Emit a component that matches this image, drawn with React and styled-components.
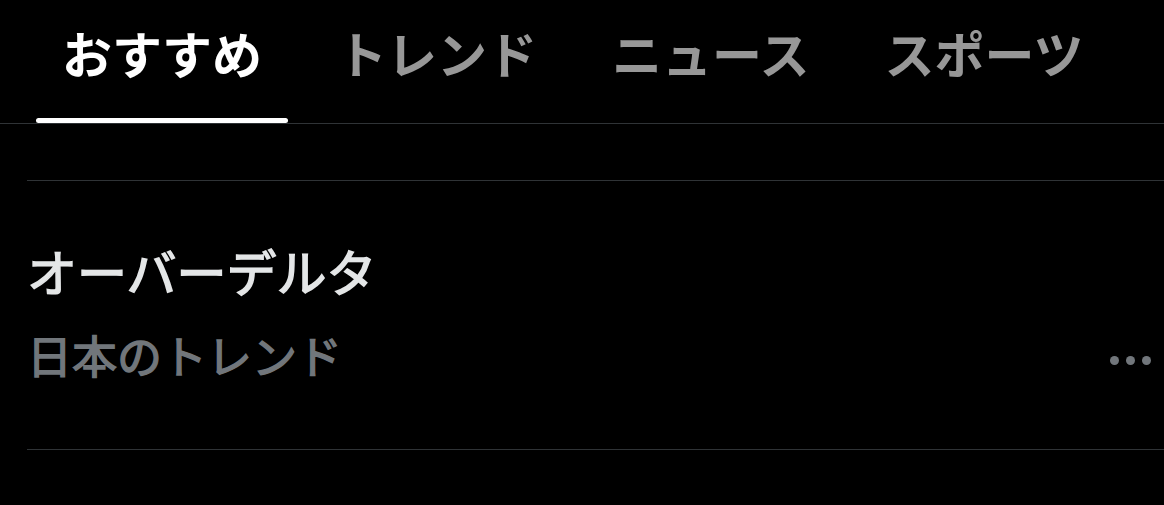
import { createGlobalStyle } from "styled-components";
import styled from "styled-components";

const GlobalStyle = createGlobalStyle`
  html, body {
    margin: 0;
    padding: 0;
    background: #000;
  }
  body {
    font-family: "Noto Sans CJK JP", "Noto Sans", sans-serif;
    -webkit-font-smoothing: antialiased;
  }
`;

const Page = styled.div`
  width: 1164px;
  height: 505px;
  background: #000;
  overflow: hidden;
`;

const TabBar = styled.nav`
  display: flex;
  gap: 23px;
  padding-left: 36px;
  height: 123px;
  border-bottom: 1px solid #2f3336;
`;

const Tab = styled.div`
  display: flex;
  flex-direction: column;
  justify-content: space-between;
  padding: 0 26px;
`;

const TabLabel = styled.span`
  margin-top: 27px;
  font-size: 50px;
  line-height: 50px;
  font-weight: 600;
  white-space: nowrap;
  color: ${({ $active }) => ($active ? "#ffffff" : "#979797")};
`;

const Indicator = styled.div`
  height: 5px;
  margin: 0 -26px;
  border-radius: 3px;
  background: ${({ $active }) => ($active ? "#ffffff" : "transparent")};
`;

const List = styled.div`
  padding-left: 27px;
`;

const Spacer = styled.div`
  height: 56px;
  border-bottom: 1px solid #2f3336;
`;

const TrendItem = styled.div`
  display: flex;
  align-items: center;
  justify-content: space-between;
  height: 268px;
  padding-right: 13px;
  border-bottom: 1px solid #2f3336;
`;

const TrendText = styled.div`
  display: flex;
  flex-direction: column;
  gap: 32px;
  margin-top: -8px;
`;

const Title = styled.div`
  font-size: 50px;
  line-height: 56px;
  font-weight: 400;
  color: #e4e6e7;
  -webkit-text-stroke: 1.5px #e4e6e7;
`;

const Meta = styled.div`
  font-size: 45px;
  line-height: 50px;
  font-weight: 400;
  color: #71767b;
  -webkit-text-stroke: 1.4px #71767b;
`;

const More = styled.div`
  display: flex;
  gap: 7px;
  margin-top: 90px;
`;

const Dot = styled.span`
  width: 9px;
  height: 9px;
  border-radius: 50%;
  background: #71767b;
`;

const tabs = ["おすすめ", "トレンド", "ニュース", "スポーツ"];

export default function App() {
  return (
    <Page>
      <GlobalStyle />
      <TabBar>
        {tabs.map((t, i) => (
          <Tab key={t}>
            <TabLabel $active={i === 0}>{t}</TabLabel>
            <Indicator $active={i === 0} />
          </Tab>
        ))}
      </TabBar>
      <List>
        <Spacer />
        <TrendItem>
          <TrendText>
            <Title>オーバーデルタ</Title>
            <Meta>日本のトレンド</Meta>
          </TrendText>
          <More>
            <Dot />
            <Dot />
            <Dot />
          </More>
        </TrendItem>
      </List>
    </Page>
  );
}
